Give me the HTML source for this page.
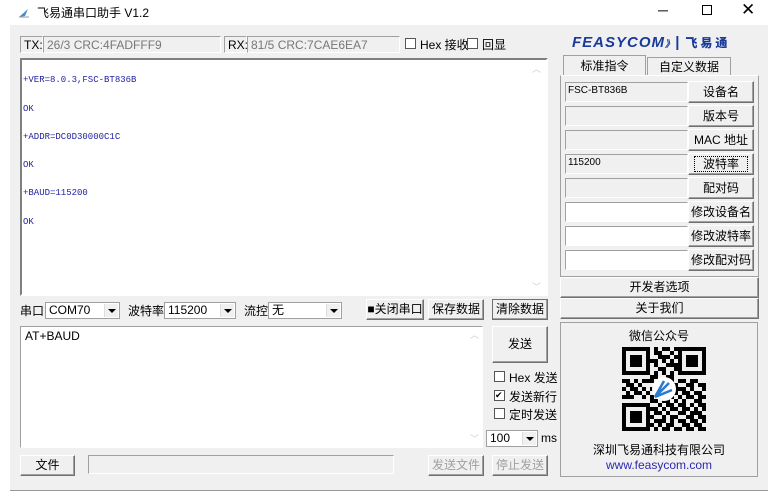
<!DOCTYPE html>
<html><head><meta charset="utf-8"><style>
*{box-sizing:border-box;margin:0;padding:0}
body{width:773px;height:499px;background:#fff;position:relative;overflow:hidden;font-family:"Liberation Sans","Noto Sans CJK SC",sans-serif;font-size:12px;color:#000}
.a{position:absolute}
.win{left:10px;top:25px;width:758px;height:466px;background:#f0f0f0;border-bottom:1px solid #999}
.sunk{border:1px solid;border-color:#a0a0a0 #fff #fff #a0a0a0;background:#fff}
.lbl{border:1px solid;border-color:#a0a0a0 #fff #fff #a0a0a0;background:#f0f0f0;color:#444;padding:1px 3px}
.btn{border:1px solid;border-color:#fff #707070 #707070 #fff;background:#f0f0f0;text-align:center;box-shadow:inset -1px -1px 0 #a0a0a0}
.dis{color:#a0a0a0}
.cb{width:11px;height:11px;border:1px solid #555;background:#fff}
.combo{border:1px solid #a0a0a0;background:#fff;padding-left:3px;line-height:15px}
.combo i{position:absolute;right:1px;top:1px;width:14px;height:13px;background:#f0f0f0;border-left:1px solid #ddd}
.combo i:after{content:"";position:absolute;left:3px;top:5px;border:4px solid transparent;border-top:4px solid #000;border-bottom:0}
.rx{font-family:"Liberation Mono","Noto Serif CJK SC",monospace;font-size:9px;color:#2323a0}
.tab{border:1px solid #a0a0a0;border-bottom:none;background:#f0f0f0;text-align:center;line-height:20px}
</style></head><body>
<svg class="a" style="left:18px;top:6px" width="12" height="12"><path d="M1 11 L10 3 L7 10Z" fill="#4a8ad0"/><path d="M1 11 L11 11" stroke="#999"/></svg>
<div class="a" style="left:37px;top:4px;font-size:12px">飞易通串口助手 V1.2</div>
<div class="a" style="left:658px;top:2px;font-size:14px">─</div>
<div class="a" style="left:702px;top:5px;width:10px;height:10px;border:1px solid #000"></div>
<div class="a" style="left:741px;top:0px;font-size:17px">✕</div>
<div class="a win"></div>
<div class="a lbl" style="left:20px;top:36px;width:23px;height:17px;color:#000">TX:</div>
<div class="a lbl" style="left:43px;top:36px;width:178px;height:17px;color:#777">26/3 CRC:4FADFFF9</div>
<div class="a lbl" style="left:224px;top:36px;width:23px;height:17px;color:#000">RX:</div>
<div class="a lbl" style="left:247px;top:36px;width:153px;height:17px;color:#777">81/5 CRC:7CAE6EA7</div>
<div class="a cb" style="left:405px;top:38px"></div><div class="a" style="left:420px;top:36px">Hex 接收</div>
<div class="a cb" style="left:467px;top:38px"></div><div class="a" style="left:482px;top:36px">回显</div>
<div class="a sunk" style="left:20px;top:58px;width:528px;height:238px;border:2px solid;border-color:#808080 #fff #fff #808080"></div>
<div class="a" style="left:532px;top:62px;color:#ccc;font-size:9px">︿</div>
<div class="a" style="left:532px;top:280px;color:#ccc;font-size:9px">﹀</div>
<div class="a rx" style="left:23px;top:75px">+VER=8.0.3,FSC-BT836B</div>
<div class="a rx" style="left:23px;top:104px">OK</div>
<div class="a rx" style="left:23px;top:132px">+ADDR=DC0D30000C1C</div>
<div class="a rx" style="left:23px;top:160px">OK</div>
<div class="a rx" style="left:23px;top:188px">+BAUD=115200</div>
<div class="a rx" style="left:23px;top:217px">OK</div>
<div class="a" style="left:20px;top:302px">串口</div>
<div class="a combo" style="left:45px;top:302px;width:75px;height:17px">COM70<i></i></div>
<div class="a" style="left:128px;top:302px">波特率</div>
<div class="a combo" style="left:164px;top:302px;width:72px;height:17px">115200<i></i></div>
<div class="a" style="left:244px;top:302px">流控</div>
<div class="a combo" style="left:268px;top:302px;width:74px;height:17px">无<i></i></div>
<div class="a btn" style="left:366px;top:299px;width:58px;height:21px;line-height:19px">■关闭串口</div>
<div class="a btn" style="left:428px;top:299px;width:56px;height:21px;line-height:19px">保存数据</div>
<div class="a btn" style="left:492px;top:299px;width:56px;height:21px;line-height:19px;border:1px solid #707070">清除数据</div>
<div class="a sunk" style="left:20px;top:326px;width:463px;height:122px;padding:2px 4px">AT+BAUD</div>
<div class="a" style="left:470px;top:328px;color:#ccc;font-size:9px">︿</div>
<div class="a" style="left:470px;top:432px;color:#ccc;font-size:9px">﹀</div>
<div class="a btn" style="left:492px;top:326px;width:56px;height:37px;line-height:35px">发送</div>
<div class="a cb" style="left:494px;top:371px"></div><div class="a" style="left:509px;top:369px">Hex 发送</div>
<div class="a cb" style="left:494px;top:390px;font-size:9px;line-height:9px">✔</div><div class="a" style="left:509px;top:388px">发送新行</div>
<div class="a cb" style="left:494px;top:408px"></div><div class="a" style="left:509px;top:406px">定时发送</div>
<div class="a combo" style="left:486px;top:430px;width:52px;height:17px">100<i></i></div>
<div class="a" style="left:541px;top:431px">ms</div>
<div class="a btn" style="left:20px;top:455px;width:55px;height:21px;line-height:19px">文件</div>
<div class="a sunk" style="left:88px;top:455px;width:306px;height:19px;background:#f0f0f0"></div>
<div class="a btn dis" style="left:428px;top:455px;width:56px;height:21px;line-height:19px">发送文件</div>
<div class="a btn dis" style="left:492px;top:455px;width:56px;height:21px;line-height:19px">停止发送</div>
<div class="a" style="left:572px;top:34px;font:italic 900 15px 'Liberation Sans',sans-serif;color:#1a3a9a;letter-spacing:1px;white-space:nowrap">FEASYCOM<span style="font-size:9px">》</span>| <span style="font-family:'Noto Sans CJK SC',sans-serif;font-size:12px;font-weight:900;font-style:normal;letter-spacing:3px">飞易通</span></div>
<div class="a tab" style="left:563px;top:55px;width:83px;height:21px">标准指令</div>
<div class="a tab" style="left:647px;top:57px;width:84px;height:19px;line-height:19px">自定义数据</div>
<div class="a" style="left:560px;top:75px;width:199px;height:202px;border:1px solid #a0a0a0;border-top:1px solid #fff"></div>
<div id="rows"></div>
<div class="a btn" style="left:560px;top:277px;width:199px;height:21px;line-height:19px">开发者选项</div>
<div class="a btn" style="left:560px;top:298px;width:199px;height:21px;line-height:19px">关于我们</div>
<div class="a" style="left:560px;top:322px;width:198px;height:155px;border:1px solid #a0a0a0"></div>
<div class="a" style="left:560px;top:327px;width:198px;text-align:center">微信公众号</div>
<svg class="a" id="qr" style="left:622px;top:347px" width="84" height="84"></svg>
<div class="a" style="left:560px;top:441px;width:198px;text-align:center">深圳飞易通科技有限公司</div>
<div class="a" style="left:560px;top:458px;width:198px;text-align:center;color:#2a2ab0">www.feasycom.com</div>
<script>
var r=[["FSC-BT836B","设备名",0],["","版本号",0],["","MAC 地址",0],["115200","波特率",0],["","配对码",0],["","修改设备名",1],["","修改波特率",1],["","修改配对码",1]],h="";
r.forEach(function(e,i){var y=82+i*24;h+='<div class="a sunk" style="left:565px;top:'+y+'px;width:123px;height:20px;font-size:10px;padding:2px 2px;'+(e[2]?'':'background:#f0f0f0')+'">'+e[0]+'</div><div class="a btn" style="left:688px;top:'+(y-1)+'px;width:66px;height:22px;line-height:20px">'+(i==3?'<span style="outline:1px dotted #000;padding:0 8px">'+e[1]+'</span>':e[1])+'</div>';});
document.getElementById('rows').innerHTML=h;
var q=["111111101011011111111","100000101100101000001","101110100111011011101","101110111010101011101","101110101001111011101","100000100110011000001","111111101010101111111","000000011001100000000","110101110110101101100","011010001101010011011","101101010000111101001","010110100001010110110","111001010110101011011","000000011011010100110","111111100101101101011","100000111010110110101","101110101101001101110","101110110010110011011","101110101110101101101","100000110101100110110","111111101011011011011"],s="";
q.forEach(function(row,y){for(var x=0;x<21;x++)if(row[x]=="1")s+='<rect x="'+x*4+'" y="'+y*4+'" width="4" height="4"/>';});
s+='<circle cx="42" cy="42" r="12" fill="#fff"/><path d="M33 50 L47 36 M33 50 L50 43 M33 50 L42 34" stroke="#2a7ad0" stroke-width="2.5"/>';
document.getElementById('qr').innerHTML=s;
</script>
</body></html>
